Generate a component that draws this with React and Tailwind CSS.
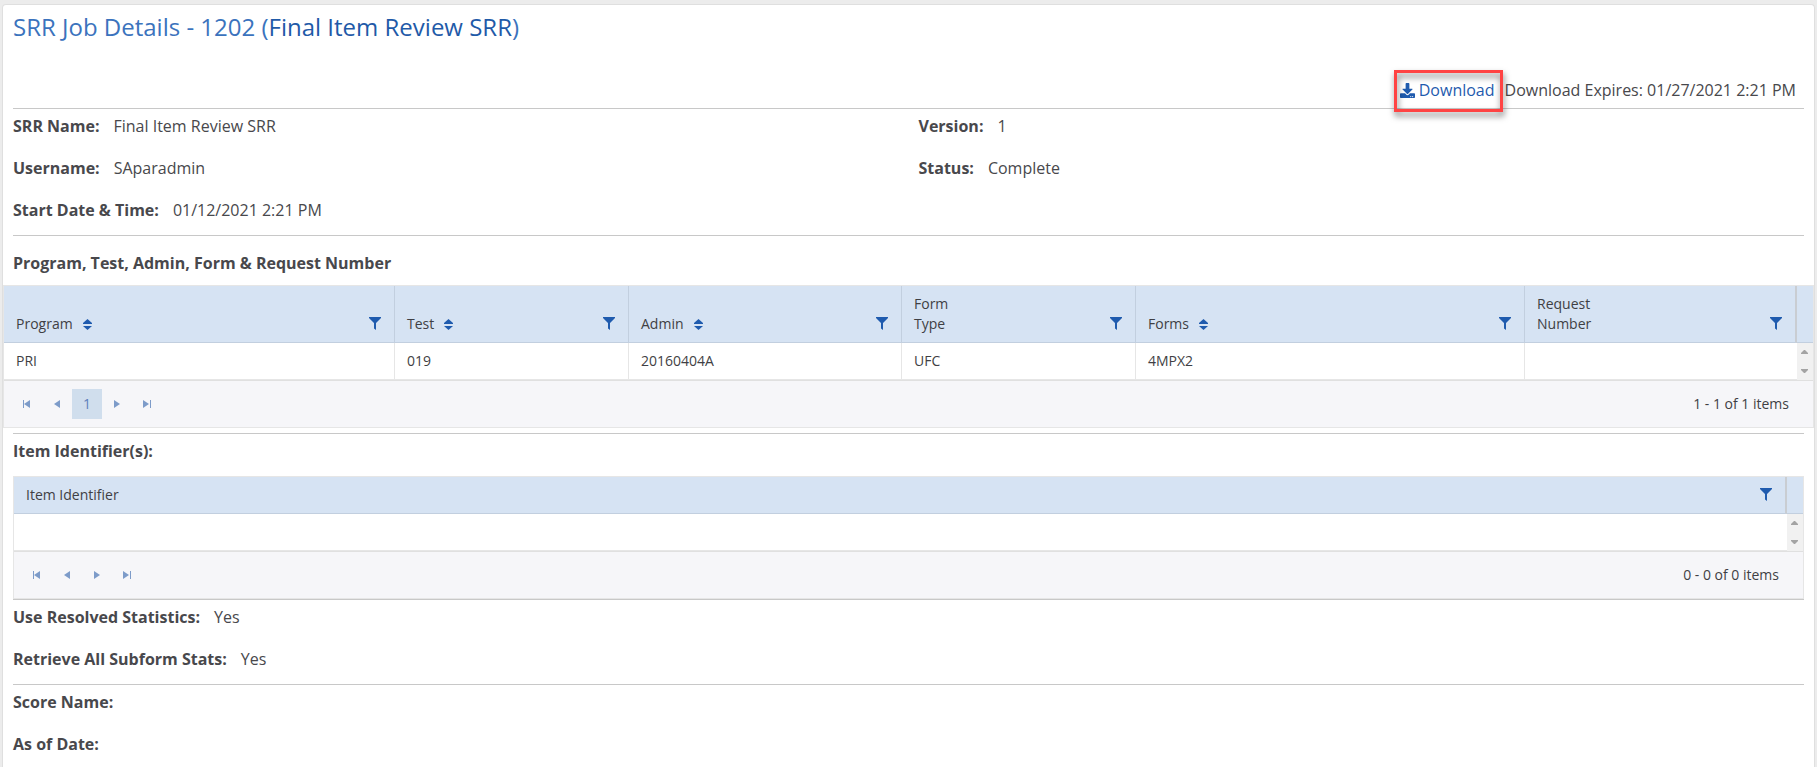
import { FaDownload } from "react-icons/fa";

const jobColumns = [
    { title: 'Program', width: 'w-[391px]', sortable: true, value: 'PRI' },
    { title: 'Test', width: 'w-[234px]', sortable: true, value: '019' },
    { title: 'Admin', width: 'w-[273px]', sortable: true, value: '20160404A' },
    { title: 'Form Type', width: 'w-[234px]', sortable: false, value: 'UFC' },
    { title: 'Forms', width: 'w-[389px]', sortable: true, value: '4MPX2' },
    { title: 'Request Number', width: 'w-auto', sortable: false, value: '' },
];

const itemColumns = [
    { title: 'Item Identifier', width: 'w-auto', sortable: false, value: '' },
];

function FilterIcon() {
    return (
        <svg width="12" height="13" viewBox="0 0 12 13" fill="currentColor">
            <path d="M0 0h12v1L7 6v7L5 11.5V6L0 1z" />
        </svg>
    );
}

function SortIcon() {
    return (
        <svg width="9" height="11" viewBox="0 0 9 11" fill="currentColor">
            <path d="M4.5 0L9 4v1H0V4zM0 7h9L4.5 11z" />
        </svg>
    );
}

function PagerButton({ label, path }) {
    return (
        <button aria-label={label} className="flex h-[30px] w-[30px] items-center justify-center text-[#7d9bc9]">
            <svg width="8" height="8" viewBox="0 0 8 8" fill="currentColor">
                <path d={path} />
            </svg>
        </button>
    );
}

function Pager({ page, summary }) {
    return (
        <div className="flex h-[47px] items-center justify-between border-t border-[#e0e0e0] bg-[#f6f6f9] pr-6 pl-2">
            <div className="flex">
                <PagerButton label="First page" path="M0 0h1v8H0zM7 0v8L1 4z" />
                <PagerButton label="Previous page" path="M7 0v8L1 4z" />
                {page && <button className="h-[30px] w-[30px] bg-[#d0deed] text-[#5c80bb]">{page}</button>}
                <PagerButton label="Next page" path="M1 0v8l6-4z" />
                <PagerButton label="Last page" path="M7 0h1v8H7zM0 0v8l6-4z" />
            </div>
            <span>{summary}</span>
        </div>
    );
}

function Grid({ columns, page, summary, narrowTitles }) {
    return (
        <div className="border border-[#e6e6e6] text-sm text-[#3f3f44]">
            <table className="w-full table-fixed border-separate border-spacing-0">
                <thead className="bg-[#d6e3f3] text-left">
                    <tr>
                        {columns.map((column, i) => (
                            <th
                                key={column.title}
                                className={`${column.width} border-b border-[#c2cfdf] py-2 pr-[13px] pl-3 align-bottom font-normal ${i === columns.length - 1 ? 'border-r-2 border-r-[#c9cdd2]' : 'border-r'}`}
                            >
                                <div className="flex items-end justify-between leading-5">
                                    <span className={`flex items-center gap-[10px] ${narrowTitles && !column.sortable ? 'w-16' : ''}`}>
                                        {column.title}
                                        {column.sortable && (
                                            <button aria-label={`Sort by ${column.title}`} className="pt-[1px] text-[#1f5bae]"><SortIcon /></button>
                                        )}
                                    </span>
                                    <button aria-label={`Filter ${column.title}`} className="pb-1 text-[#1f5bae]"><FilterIcon /></button>
                                </div>
                            </th>
                        ))}
                        <th className="w-4 border-b border-[#c2cfdf]"></th>
                    </tr>
                </thead>
                <tbody>
                    <tr>
                        {columns.map((column, i) => (
                            <td
                                key={column.title}
                                className={`h-[37px] border-b border-[#e6e6e6] px-3 leading-5 ${i === columns.length - 1 ? '' : 'border-r'}`}
                            >
                                {column.value}
                            </td>
                        ))}
                        <td className="bg-[#f1f1f1] text-[#a3a3a3]">
                            <div className="flex flex-col items-center gap-[15px]">
                                <svg width="8" height="4" viewBox="0 0 8 4" fill="currentColor"><path d="M3 0h1l3 3v1H0V3z" /></svg>
                                <svg width="8" height="4" viewBox="0 0 8 4" fill="currentColor"><path d="M0 0h7v1L4 4H3L0 1z" /></svg>
                            </div>
                        </td>
                    </tr>
                </tbody>
            </table>
            <Pager page={page} summary={summary} />
        </div>
    );
}

function Field({ label, value }) {
    return (
        <div className="flex h-[42px] gap-[14px] pt-[5px]">
            <dt className="font-bold">{label}</dt>
            <dd>{value}</dd>
        </div>
    );
}

export default function App() {
    return (
        <div className="flex min-h-screen flex-col bg-[#ececec] px-[2px] pt-1 font-['Open_Sans',sans-serif] text-base leading-6 text-[#48484c]">
            <main className="flex-1 rounded-t border border-b-0 border-[#dfdfdf] bg-white pb-1">
                <div className="mx-[10px] border-b border-[#c8c8c8]">
                    <h1 className="pt-1 text-2xl leading-9 text-[#3b73bd]">
                        SRR Job Details - 1202 (<span className="text-[#1f5aa8]">Final Item Review SRR</span>)
                    </h1>
                    <div className="flex justify-end gap-[10px] pt-[33px] pr-2 pb-[6px]">
                        <a href="#download" className="relative flex items-center gap-1 text-[#1f5bae]">
                            <FaDownload className="text-[15px]" />
                            Download
                            {/* callout around the link */}
                            <span className="absolute -top-2 -right-2 -bottom-[10px] -left-[6px] border-[3px] border-[#ff4343] drop-shadow-[1px_4px_3px_rgba(0,0,0,0.55)]"></span>
                        </a>
                        <span>Download Expires: 01/27/2021 2:21 PM</span>
                    </div>
                </div>

                <dl className="mx-[10px] grid grid-cols-2 gap-x-5 border-b border-[#c8c8c8]">
                    <Field label="SRR Name:" value="Final Item Review SRR" />
                    <Field label="Version:" value="1" />
                    <Field label="Username:" value="SAparadmin" />
                    <Field label="Status:" value="Complete" />
                    <Field label="Start Date & Time:" value="01/12/2021 2:21 PM" />
                </dl>

                <h2 className="px-[10px] pt-[15px] pb-[10px] font-bold">Program, Test, Admin, Form &amp; Request Number</h2>
                <Grid columns={jobColumns} page="1" summary="1 - 1 of 1 items" narrowTitles />

                <div className="mx-[10px] mt-[5px] border-y border-[#c8c8c8]">
                    <h2 className="pt-[5px] pb-[13px] font-bold">Item Identifier(s):</h2>
                    <Grid columns={itemColumns} summary="0 - 0 of 0 items" />
                </div>

                <dl className="mx-[10px] border-b border-[#c8c8c8]">
                    <Field label="Use Resolved Statistics:" value="Yes" />
                    <Field label="Retrieve All Subform Stats:" value="Yes" />
                </dl>

                <dl className="mx-[10px] -mb-4">
                    <Field label="Score Name:" />
                    <Field label="As of Date:" />
                </dl>
            </main>
        </div>
    );
}
